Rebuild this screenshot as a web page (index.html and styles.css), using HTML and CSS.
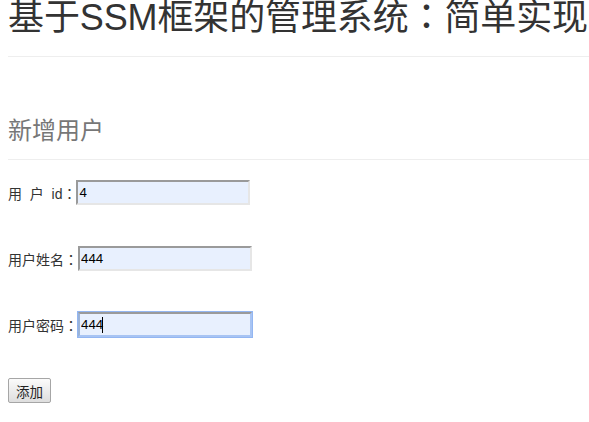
FILE: index.html
```
<!DOCTYPE html>
<html lang="zh-CN">
<head>
<meta charset="utf-8">
<title>新增用户</title>
<link rel="stylesheet" href="styles.css">
</head>
<body>
<div class="page">
  <div class="page-header">
    <h1 class="title">基于SSM框架的管理系统<span class="colon" lang="zh-TW">：</span>简单实现</h1>
  </div>
  <div class="section-header">
    <h2 class="subtitle">新增用户</h2>
  </div>
  <form class="form">
    <div class="row">
      <label class="label">用&nbsp;&nbsp;户&nbsp;&nbsp;id<span class="colon" lang="zh-TW">：</span></label><input class="field" type="text" value="4">
    </div>
    <div class="row">
      <label class="label">用户姓名<span class="colon" lang="zh-TW">：</span></label><input class="field" type="text" value="444">
    </div>
    <div class="row">
      <label class="label">用户密码<span class="colon" lang="zh-TW">：</span></label><span class="field-wrap"><input class="field focused" type="text" value="444"><span class="caret"></span></span>
    </div>
    <div class="row">
      <button class="btn" type="button">添加</button>
    </div>
  </form>
</div>
</body>
</html>
```
FILE: styles.css
```
html, body {
  margin: 0;
  padding: 0;
  background: #fff;
  overflow: hidden;
}
body {
  font-family: "Liberation Sans", "Noto Sans CJK SC", sans-serif;
  font-size: 14px;
  color: #333;
}
.page {
  padding-left: 8px;
}
.colon {
  font-family: "Noto Sans CJK TC", "Noto Sans CJK SC", sans-serif;
  line-height: 0;
}
.page-header {
  padding-bottom: 20px;
  border-bottom: 1px solid #eee;
}
.title {
  margin: 0;
  font-size: 36px;
  line-height: 36px;
  font-weight: 400;
  letter-spacing: -0.12px;
  color: #333;
  white-space: nowrap;
}
.section-header {
  margin-top: 62px;
  padding-bottom: 16px;
  border-bottom: 1px solid #eee;
}
.subtitle {
  margin: 0;
  font-size: 24px;
  line-height: 24px;
  font-weight: 400;
  color: #777;
}
.form {
  margin-top: 20px;
  display: flex;
  flex-direction: column;
  gap: 41px;
}
.row {
  display: flex;
  align-items: center;
  height: 25px;
}
.label {
  font-size: 14px;
  color: #333;
  white-space: nowrap;
}
.field {
  box-sizing: border-box;
  width: 174px;
  height: 25px;
  margin: 0;
  padding: 1px 1px;
  font-family: "Liberation Sans", Arial, sans-serif;
  font-size: 13.33px;
  color: #000;
  background: #e8f0fe;
  border-style: solid;
  border-width: 2px;
  border-color: #9a9a9a #e6e6e6 #e6e6e6 #9a9a9a;
  outline: none;
}
.field-wrap {
  position: relative;
  display: inline-block;
  height: 25px;
}
.field.focused {
  border-color: #9a9a9a #a8c4f3 #a8c4f3 #9ab3d8;
  box-shadow: 0 0 0 1px #93b6f2;
}
.caret {
  position: absolute;
  left: 24px;
  top: 5px;
  width: 1px;
  height: 16px;
  background: #000;
}
.btn {
  box-sizing: border-box;
  width: 43px;
  height: 25px;
  margin: 0;
  padding: 0;
  font-family: "Noto Sans CJK SC", sans-serif;
  font-size: 13.5px;
  color: #222;
  background: linear-gradient(#fbfbfb, #dedede);
  border: 1px solid #a6a6a6;
  border-radius: 2px;
}
```
